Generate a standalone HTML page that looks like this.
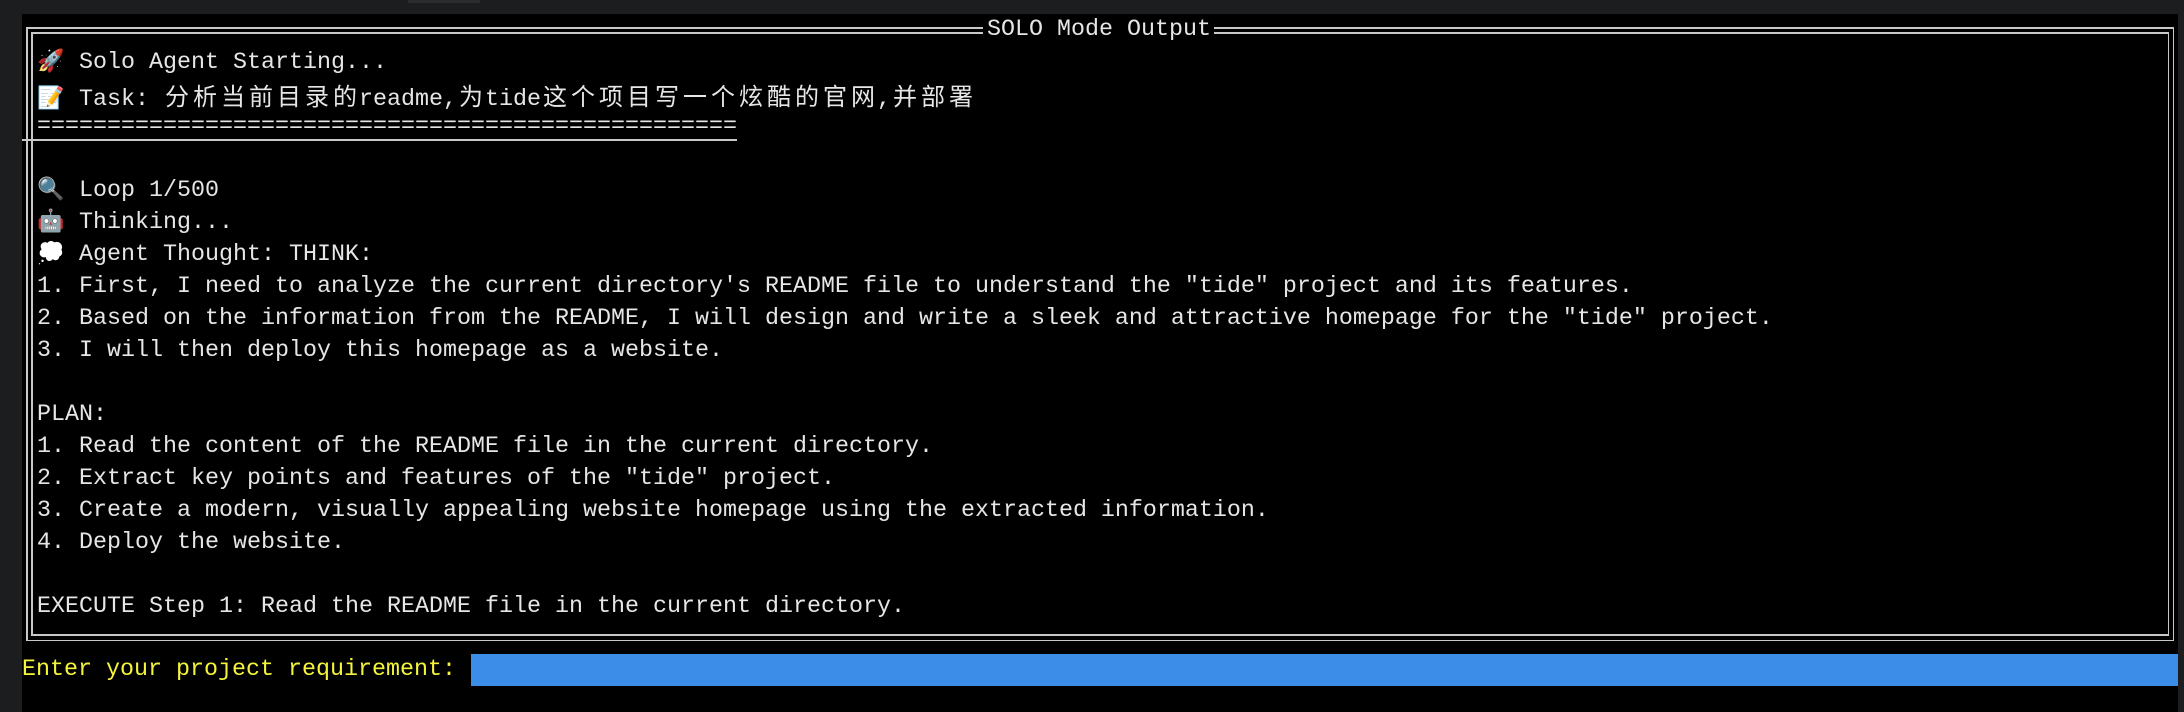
<!DOCTYPE html>
<html><head><meta charset="utf-8"><style>
html,body{margin:0;padding:0;}
body{width:2184px;height:712px;background:#1c1d1f;position:relative;overflow:hidden;}
#term{position:absolute;left:22px;top:14px;width:2156px;height:698px;background:#000;}
.h{position:absolute;height:1.5px;background:#c8c8c8;}
.v{position:absolute;width:1.5px;background:#c8c8c8;}
.l{position:absolute;left:37px;height:32px;line-height:32px;font-family:"Liberation Mono","Noto Sans CJK SC",monospace;font-size:23.33px;color:#e6e6e6;white-space:pre;}
.c{display:inline-block;width:28px;text-align:center;font-family:"Noto Sans CJK SC",sans-serif;font-size:24px;}
.e{display:inline-block;width:28px;text-align:center;font-size:22px;}
</style></head><body>
<div style="position:absolute;left:408px;top:0;width:72px;height:3px;background:#2b2c2f"></div>
<div id="term"></div>
<!-- outer border -->
<div class="h" style="left:26px;top:27px;width:957px"></div>
<div class="h" style="left:1214px;top:27px;width:960px"></div>
<div class="h" style="left:31px;top:32px;width:952px"></div>
<div class="h" style="left:1214px;top:32px;width:955px"></div>
<div class="h" style="left:26px;top:639.5px;width:2148px"></div>
<div class="h" style="left:31px;top:634px;width:2138px"></div>
<div class="v" style="left:26px;top:27px;height:614px"></div>
<div class="v" style="left:31px;top:32px;height:603px"></div>
<div class="v" style="left:2172.5px;top:27px;height:614px"></div>
<div class="v" style="left:2167.5px;top:32px;height:603px"></div>
<div class="h" style="left:22px;top:139px;width:715px"></div>
<div class="l" style="left:987px;top:14px;">SOLO Mode Output</div>

<div class="l" style="top:47px"><span class="e">🚀</span> Solo Agent Starting...</div>
<div class="l" style="top:79px"><span class="e">📝</span> Task: <span class="c">分</span><span class="c">析</span><span class="c">当</span><span class="c">前</span><span class="c">目</span><span class="c">录</span><span class="c">的</span>readme,<span class="c">为</span>tide<span class="c">这</span><span class="c">个</span><span class="c">项</span><span class="c">目</span><span class="c">写</span><span class="c">一</span><span class="c">个</span><span class="c">炫</span><span class="c">酷</span><span class="c">的</span><span class="c">官</span><span class="c">网</span>,<span class="c">并</span><span class="c">部</span><span class="c">署</span></div>
<div class="l" style="top:111px">==================================================</div>
<div class="l" style="top:175px"><span class="e">🔍</span> Loop 1/500</div>
<div class="l" style="top:207px"><span class="e">🤖</span> Thinking...</div>
<div class="l" style="top:239px"><span class="e">💭</span> Agent Thought: THINK:</div>
<div class="l" style="top:271px">1. First, I need to analyze the current directory's README file to understand the "tide" project and its features.</div>
<div class="l" style="top:303px">2. Based on the information from the README, I will design and write a sleek and attractive homepage for the "tide" project.</div>
<div class="l" style="top:335px">3. I will then deploy this homepage as a website.</div>
<div class="l" style="top:399px">PLAN:</div>
<div class="l" style="top:431px">1. Read the content of the README file in the current directory.</div>
<div class="l" style="top:463px">2. Extract key points and features of the "tide" project.</div>
<div class="l" style="top:495px">3. Create a modern, visually appealing website homepage using the extracted information.</div>
<div class="l" style="top:527px">4. Deploy the website.</div>
<div class="l" style="top:591px">EXECUTE Step 1: Read the README file in the current directory.</div>

<div class="l" style="left:22px;top:654px;color:#f4f43c">Enter your project requirement: </div>
<div style="position:absolute;left:471px;top:654px;width:1707px;height:32px;background:#3b8de8"></div>
</body></html>
